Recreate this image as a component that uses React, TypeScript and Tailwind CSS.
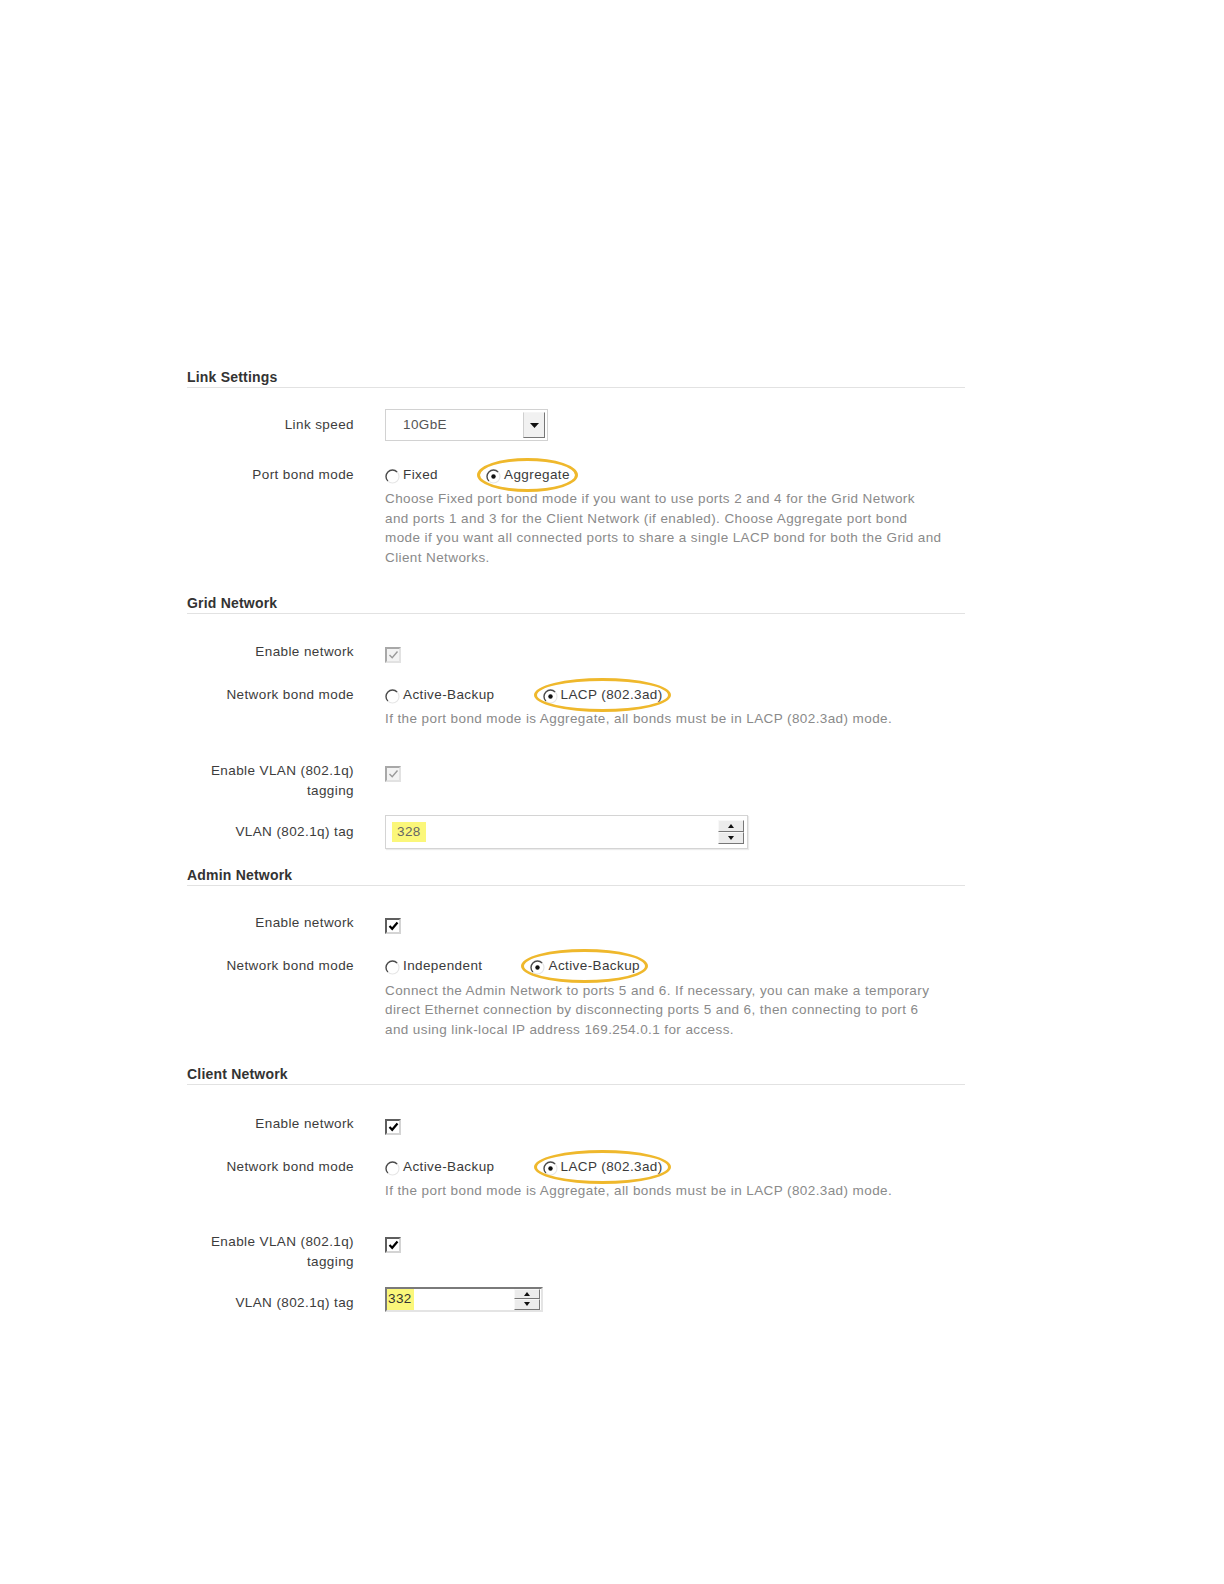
import React from "react";

// 라디오 버튼 (오래된 윈도우 스타일)
function Radio({ checked }: { checked?: boolean }) {
  return (
    <svg width="15" height="15" viewBox="0 0 15 15" className="mr-[3px] mt-[4px] shrink-0">
      <circle cx="7.5" cy="7.5" r="6.5" fill="#fff" />
      <path d="M12.1 2.9 A6.5 6.5 0 0 1 2.9 12.1" stroke="#e6e6e6" strokeWidth="1.2" fill="none" />
      <path d="M2.9 12.1 A6.5 6.5 0 0 1 12.1 2.9" stroke="#4a4a4a" strokeWidth="1.4" fill="none" />
      {checked && <circle cx="7.5" cy="7.5" r="2.2" fill="#111" />}
    </svg>
  );
}

function Checkbox({ disabled }: { disabled?: boolean }) {
  return (
    <span
      className={`mt-[5px] flex h-[16px] w-[16px] items-center justify-center ${
        disabled
          ? "border-2 border-t-[#a8a8a8] border-l-[#a8a8a8] border-r-[#e2e2e2] border-b-[#e2e2e2] bg-[#f3f3f3]"
          : "border-2 border-t-[#5e5e5e] border-l-[#5e5e5e] border-r-[#d4d4d4] border-b-[#d4d4d4] bg-white"
      }`}
    >
      <svg width="11" height="10" viewBox="0 0 11 10">
        <path
          d="M1.5 5 L4.2 7.8 L9.5 1.5"
          stroke={disabled ? "#9a9a9a" : "#000"}
          strokeWidth={disabled ? 1.4 : 2.2}
          fill="none"
        />
      </svg>
    </span>
  );
}

// 선택된 옵션 둘레의 노란 타원 표시
function Option({ label, checked }: { label: string; checked?: boolean }) {
  return (
    <span className="relative flex h-[20px] items-start">
      {checked && (
        <span className="absolute -bottom-[7px] -left-[9px] -right-[8px] -top-[7px] rounded-[50%] border-[3px] border-[#efb82c]" />
      )}
      <Radio checked={checked} />
      <span className="leading-[20px] text-[#3a3a3a]">{label}</span>
    </span>
  );
}

function Row({
  label,
  children,
  className = "",
  labelClass = "",
  center,
}: {
  label: React.ReactNode;
  children: React.ReactNode;
  className?: string;
  labelClass?: string;
  center?: boolean;
}) {
  return (
    <div className={`flex ${center ? "items-center" : "items-start"} ${className}`}>
      <div className={`w-[167px] shrink-0 text-right leading-[20px] text-[#3c3c3c] ${labelClass}`}>
        {label}
      </div>
      <div className="ml-[31px] flex-1">{children}</div>
    </div>
  );
}

function Heading({ title, className = "" }: { title: string; className?: string }) {
  return (
    <div
      className={`border-b border-[#e2e2e2] text-[14px] font-bold leading-[20px] tracking-[0.2px] text-[#333] ${className}`}
    >
      {title}
    </div>
  );
}

function Spinner({ className = "" }: { className?: string }) {
  return (
    <div className={`flex flex-col ${className}`}>
      {["up", "down"].map((d) => (
        <div
          key={d}
          className="flex h-[12px] w-[26px] items-center justify-center border border-t-[#f8f8f8] border-l-[#f8f8f8] border-r-[#777] border-b-[#777] bg-[#ececec]"
        >
          <svg width="6" height="4" viewBox="0 0 6 4">
            <path d={d === "up" ? "M0 4 L3 0 L6 4 Z" : "M0 0 L6 0 L3 4 Z"} fill="#111" />
          </svg>
        </div>
      ))}
    </div>
  );
}

const desc = "leading-[19.5px] text-[#8a8a8a]";

export default function App() {
  return (
    <div className="min-h-[1584px] bg-white font-['Liberation_Sans',Arial,sans-serif] text-[13.5px] tracking-[0.4px]">
      <div className="ml-[187px] w-[778px] pt-[367px]">
        {/* Link Settings */}
        <Heading title="Link Settings" />
        <Row label="Link speed" center className="mt-[21px]">
          <div className="flex h-[32px] w-[163px] border border-[#d2d2d2] bg-white p-[2px]">
            <div className="flex flex-1 items-center pl-[15px] text-[#555]">10GbE</div>
            <div className="flex w-[22px] items-center justify-center border border-t-[#f5f5f5] border-l-[#cfcfcf] border-r-[#777] border-b-[#777] bg-[#f1f1f1]">
              <svg width="9" height="5" viewBox="0 0 9 5">
                <path d="M0 0 L9 0 L4.5 5 Z" fill="#111" />
              </svg>
            </div>
          </div>
        </Row>
        <Row label="Port bond mode" className="mt-[24px]">
          <div className="flex gap-[48px]">
            <Option label="Fixed" />
            <Option label="Aggregate" checked />
          </div>
          <div className={`mt-[4px] ${desc}`}>
            Choose Fixed port bond mode if you want to use ports 2 and 4 for the Grid Network
            <br />
            and ports 1 and 3 for the Client Network (if enabled). Choose Aggregate port bond
            <br />
            mode if you want all connected ports to share a single LACP bond for both the Grid and
            <br />
            Client Networks.
          </div>
        </Row>

        {/* Grid Network */}
        <Heading title="Grid Network" className="mt-[26px]" />
        <Row label="Enable network" className="mt-[28px]">
          <Checkbox disabled />
        </Row>
        <Row label="Network bond mode" className="mt-[22px]">
          <div className="flex gap-[48px]">
            <Option label="Active-Backup" />
            <Option label="LACP (802.3ad)" checked />
          </div>
          <div className={`mt-[4px] ${desc}`}>
            If the port bond mode is Aggregate, all bonds must be in LACP (802.3ad) mode.
          </div>
        </Row>
        <Row
          label={
            <>
              Enable VLAN (802.1q)
              <br />
              tagging
            </>
          }
          className="mt-[32px]"
        >
          <Checkbox disabled />
        </Row>
        <Row label="VLAN (802.1q) tag" center className="mt-[14px]">
          <div className="flex h-[34px] w-[363px] items-center border border-[#d4d4d4] bg-white pl-[6px] pr-[3px] shadow-[1px_1px_1px_rgba(0,0,0,0.08)]">
            <span className="bg-[#fbf77a] px-[5px] leading-[20px] text-[#666]">328</span>
            <div className="flex-1" />
            <Spinner />
          </div>
        </Row>

        {/* Admin Network */}
        <Heading title="Admin Network" className="mt-[16px]" />
        <Row label="Enable network" className="mt-[27px]">
          <Checkbox />
        </Row>
        <Row label="Network bond mode" className="mt-[22px]">
          <div className="flex gap-[48px]">
            <Option label="Independent" />
            <Option label="Active-Backup" checked />
          </div>
          <div className={`mt-[5px] ${desc}`}>
            Connect the Admin Network to ports 5 and 6. If necessary, you can make a temporary
            <br />
            direct Ethernet connection by disconnecting ports 5 and 6, then connecting to port 6
            <br />
            and using link-local IP address 169.254.0.1 for access.
          </div>
        </Row>

        {/* Client Network */}
        <Heading title="Client Network" className="mt-[25px]" />
        <Row label="Enable network" className="mt-[29px]">
          <Checkbox />
        </Row>
        <Row label="Network bond mode" className="mt-[22px]">
          <div className="flex gap-[48px]">
            <Option label="Active-Backup" />
            <Option label="LACP (802.3ad)" checked />
          </div>
          <div className={`mt-[4px] ${desc}`}>
            If the port bond mode is Aggregate, all bonds must be in LACP (802.3ad) mode.
          </div>
        </Row>
        <Row
          label={
            <>
              Enable VLAN (802.1q)
              <br />
              tagging
            </>
          }
          className="mt-[31px]"
        >
          <Checkbox />
        </Row>
        <Row label="VLAN (802.1q) tag" labelClass="mt-[6px]" className="mt-[15px]">
          <div className="flex h-[25px] w-[158px] items-stretch border-2 border-t-[#7a7a7a] border-l-[#7a7a7a] border-r-[#e4e4e4] border-b-[#e4e4e4] bg-white pr-[1px]">
            <span className="flex items-center bg-[#fbf77a] pl-[1px] pr-[2px] text-[#333]">332</span>
            <div className="flex-1" />
            <Spinner className="justify-center" />
          </div>
        </Row>
      </div>
    </div>
  );
}
